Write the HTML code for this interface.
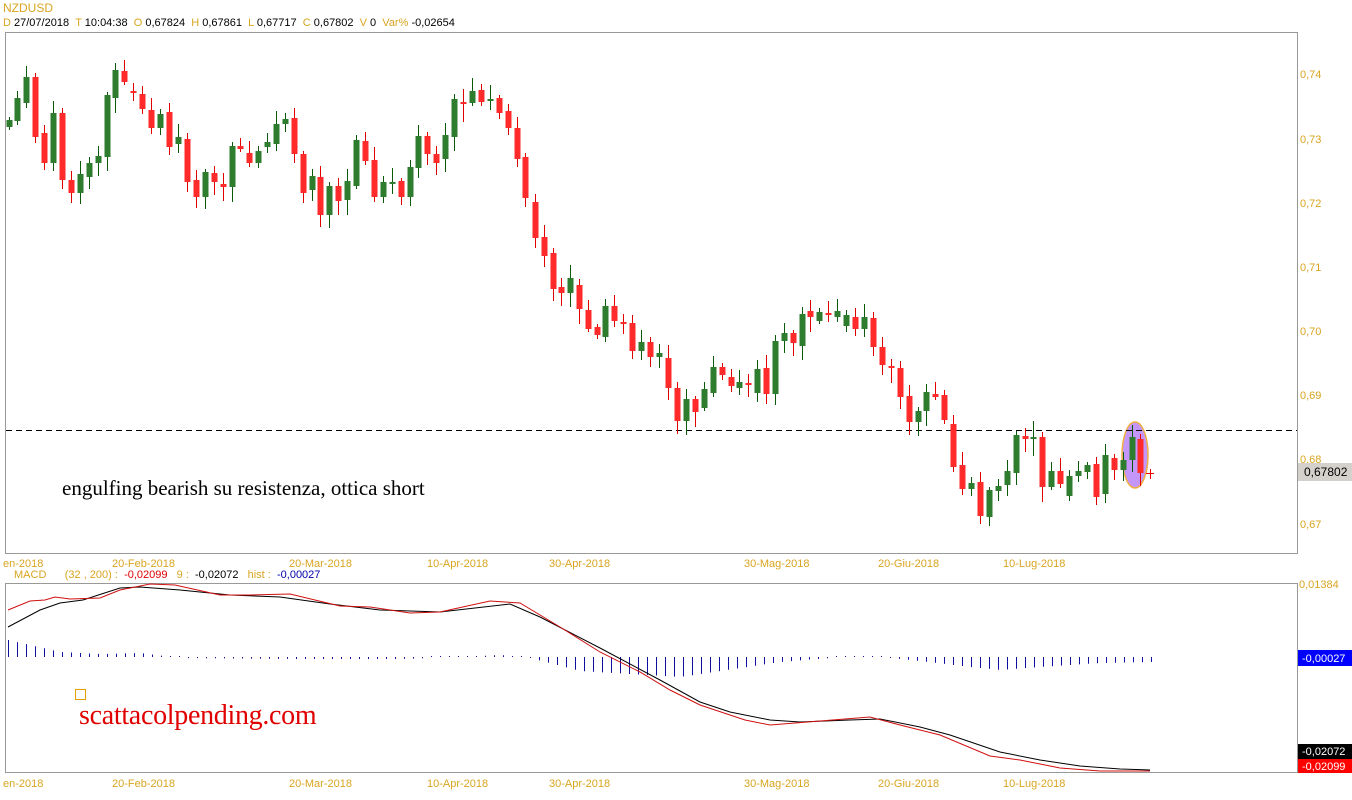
<!DOCTYPE html>
<html><head><meta charset="utf-8"><style>
body{margin:0;width:1352px;height:800px;background:#fff;overflow:hidden;font-family:"Liberation Sans",sans-serif;position:relative}
.t{position:absolute;font-size:11px;white-space:nowrap;line-height:12px}
.g{color:#d9a520}
svg{position:absolute;left:0;top:0}
</style></head><body>
<div class="t g" style="left:3px;top:2px;font-size:12px">NZDUSD</div>
<div class="t" style="left:3px;top:17px"><span class="g">D</span> 27/07/2018 &nbsp;<span class="g">T</span> 10:04:38 &nbsp;<span class="g">O</span> 0,67824 &nbsp;<span class="g">H</span> 0,67861 &nbsp;<span class="g">L</span> 0,67717 &nbsp;<span class="g">C</span> 0,67802 &nbsp;<span class="g">V</span> 0 &nbsp;<span class="g">Var%</span> -0,02654</div>
<svg id="s" width="1352" height="800"></svg>
<div class="t" style="left:14px;top:569px"><span class="g">MACD</span> &nbsp;&nbsp;&nbsp;&nbsp;&nbsp;<span class="g">(32 , 200) :</span> &nbsp;<span style="color:#d00">-0,02099</span> &nbsp;&nbsp;<span class="g">9 :</span> &nbsp;-0,02072 &nbsp;&nbsp;<span class="g">hist :</span> &nbsp;<span style="color:#00a">-0,00027</span></div>
<div style="position:absolute;left:62px;top:476px;font:21px 'Liberation Serif',serif;color:#000">engulfing bearish su resistenza, ottica short</div>
<div style="position:absolute;left:75px;top:689px;width:9px;height:9px;border:1px solid #e0a000"></div>
<div style="position:absolute;left:79px;top:700px;font:28px 'Liberation Serif',serif;color:#e00000;letter-spacing:-0.3px">scattacolpending.com</div>
<script>
var S=document.getElementById('s'),h='';
h+='<rect x="5.5" y="32.5" width="1292" height="521" fill="none" stroke="#999"/>';
h+='<rect x="5.5" y="583.5" width="1292" height="189" fill="none" stroke="#999"/>';
var B=[[9,127,120],[17,121,98],[26,103,77],[35,77,137],[44,133,163],[53,163,113],[62,113,180],[71,180,193],[80,193,174],[89,177,163],[98,163,156],[107,157,95],[115,98,70],[124,71,82],[133,91,93],[142,94,109],[151,110,128],[160,128,114],[169,112,147],[178,144,137],[187,139,182],[196,180,197],[205,197,172],[214,173,182],[223,184,187],[232,187,146],[240,146,149],[249,153,163],[258,163,151],[267,147,142],[276,144,124],[285,124,119],[294,118,154],[303,154,193],[312,190,176],[320,177,215],[329,215,186],[338,186,201],[347,200,181],[356,186,140],[365,141,161],[374,160,197],[383,197,182],[392,183,182],[401,181,197],[410,197,167],[418,168,136],[427,136,154],[436,154,163],[445,159,135],[454,137,99],[463,102,103],[472,103,91],[481,90,102],[490,101,99],[499,98,113],[508,111,128],[517,128,159],[525,157,198],[535,202,238],[544,237,256],[553,253,289],[561,287,293],[570,293,278],[579,285,309],[588,310,329],[597,327,335],[605,337,306],[614,306,321],[623,322,323],[632,323,351],[641,351,342],[650,342,357],[659,357,353],[668,358,388],[677,388,421],[686,421,399],[695,399,412],[704,408,389],[713,393,367],[722,367,375],[731,377,386],[739,388,382],[748,383,385],[757,393,369],[766,368,394],[775,394,341],[784,341,333],[793,333,343],[802,346,314],[810,311,317],[819,321,312],[828,313,314],[837,317,311],[846,326,315],[855,317,329],[864,329,317],[873,318,347],[882,347,365],[891,366,368],[900,368,397],[909,396,422],[918,422,411],[926,411,392],[935,394,397],[944,395,420],[953,424,467],[962,465,489],[971,489,483],[980,482,516],[989,517,490],[998,491,486],[1007,485,471],[1016,473,435],[1025,436,439],[1033,438,437],[1042,437,487],[1051,487,471],[1060,471,484],[1069,496,476],[1078,476,471],[1087,472,465],[1096,464,497],[1105,494,455],[1114,458,470],[1123,470,460],[1132,460,437],[1140,439,473]];
h+='<ellipse cx="1135" cy="455" rx="13" ry="33" fill="#c496fa" stroke="#f0b040" stroke-width="1.5"/>';
h+='<line x1="6" y1="430.5" x2="1297" y2="430.5" stroke="#000" stroke-dasharray="6,4"/>';
B.forEach(function(b,i){var x=b[0],t=Math.min(b[1],b[2]),u=Math.max(b[1],b[2]),gr=b[2]<b[1];
var r1=3+((i*37)%11),r2=3+((i*53)%13);if(u-t<3){r1+=4;r2+=4;}
var c=gr?'#2e7d2e':'#ff2a2a',w=gr?'#0a5a0a':'#e00000';
h+='<line x1="'+(x+.5)+'" y1="'+(t-r1)+'" x2="'+(x+.5)+'" y2="'+(u+r2)+'" stroke="'+w+'"/>';
h+='<rect x="'+(x-2.5)+'" y="'+t+'" width="6" height="'+Math.max(u-t,2)+'" fill="'+c+'"/>';});
h+='<line x1="1146" y1="473.5" x2="1154" y2="473.5" stroke="#e00"/><line x1="1150.5" y1="469" x2="1150.5" y2="479" stroke="#e00"/>';
var P=[['0,74',74],['0,73',139],['0,72',203],['0,71',267],['0,70',331],['0,69',395],['0,68',459],['0,67',524]];
P.forEach(function(p){h+='<text x="1300" y="'+(p[1]+4)+'" font-size="11" fill="#d9a520" font-family="Liberation Sans">'+p[0]+'</text>';});
h+='<rect x="1298" y="463" width="54" height="18" fill="#d4d0cc"/><text x="1304" y="476" font-size="12" font-family="Liberation Sans">0,67802</text>';
var D=[['en-2018',3],['20-Feb-2018',112],['20-Mar-2018',289],['10-Apr-2018',427],['30-Apr-2018',549],['30-Mag-2018',744],['20-Giu-2018',878],['10-Lug-2018',1003]];
D.forEach(function(d){[567,787].forEach(function(y){h+='<text x="'+d[1]+'" y="'+y+'" font-size="11" fill="#d9a520" font-family="Liberation Sans">'+d[0]+'</text>';});});
function hv(x){var k=[[8,17],[60,5],[100,3],[140,4],[180,-1],[300,-2],[400,-2],[460,0],[500,2],[530,-1],[580,-14],[680,-20],[720,-14],[780,-5],[830,-1],[870,1],[920,-4],[970,-10],[1000,-13],[1040,-10],[1100,-6],[1152,-5]];
for(var i=0;i<k.length-1;i++)if(x<=k[i+1][0]){var f=(x-k[i][0])/(k[i+1][0]-k[i][0]);return k[i][1]+f*(k[i+1][1]-k[i][1]);}return -5;}
for(var x=8;x<=1152;x+=9){var v=hv(x),y0=657,y1=657-v;if(Math.abs(v)<1)y1=y0-1;h+='<line x1="'+(x+.5)+'" y1="'+y0+'" x2="'+(x+.5)+'" y2="'+y1+'" stroke="#1010a0"/>';}
var BL=[[8,627],[40,610],[60,603],[83,600],[120,588],[140,587],[180,590],[230,595],[280,597],[330,604],[380,610],[440,612],[510,604],[540,617],[600,648],[660,680],[700,702],[730,712],[770,720],[800,722],[850,720],[880,719],[920,727],[950,735],[1000,752],[1040,760],[1080,766],[1120,769],[1150,770]];
var RL=[[8,610],[30,601],[45,600],[55,597],[70,599],[100,598],[120,590],[150,584],[175,585],[220,595],[250,595],[290,594],[340,606],[370,607],[410,613],[440,612],[490,601],[520,603],[560,627],[600,652],[640,672],[670,690],[700,705],[745,720],[770,725],[820,721],[870,717],[900,725],[940,735],[990,756],[1020,760],[1060,768],[1100,771],[1150,771]];
function pl(a,c){return '<polyline fill="none" stroke="'+c+'" stroke-width="1" points="'+a.map(function(p){return p.join(',')}).join(' ')+'"/>';}
h+=pl(BL,'#000')+pl(RL,'#d01010');
h+='<text x="1299" y="588" font-size="11" fill="#d9a520" font-family="Liberation Sans">0,01384</text>';
h+='<rect x="1298" y="650" width="54" height="16" fill="#0000ff"/><text x="1302" y="662" font-size="11" fill="#fff" font-family="Liberation Sans">-0,00027</text>';
h+='<rect x="1298" y="744" width="54" height="15" fill="#000"/><text x="1302" y="755" font-size="11" fill="#fff" font-family="Liberation Sans">-0,02072</text>';
h+='<rect x="1298" y="759" width="54" height="14" fill="#ff0000"/><text x="1302" y="770" font-size="11" fill="#fff" font-family="Liberation Sans">-0,02099</text>';
S.innerHTML=h;
</script>
</body></html>
